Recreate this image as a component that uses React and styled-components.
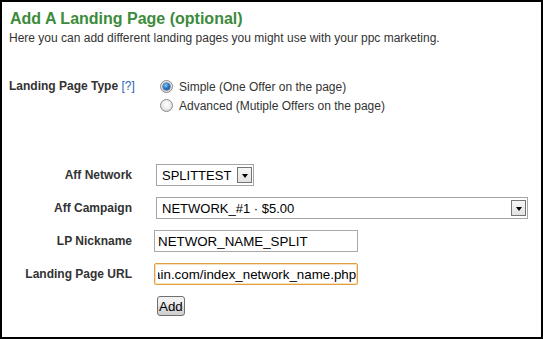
import React, { useEffect, useRef } from "react";
import styled, { createGlobalStyle } from "styled-components";

const Global = createGlobalStyle`
  html, body { margin: 0; padding: 0; background: #fff; }
  body { font-family: "Liberation Sans", Arial, sans-serif; }
`;

const Frame = styled.div`
  box-sizing: border-box;
  width: 543px;
  height: 339px;
  border: 2px solid #000;
  padding: 8px 7px 0 7px;
  background: #fff;
  font-family: "Liberation Sans", Arial, sans-serif;
  color: #333;
`;

const Title = styled.h2`
  margin: 0 0 0 1px;
  font-size: 16px;
  line-height: 18px;
  font-weight: bold;
  color: #3b8b3b;
`;

const Intro = styled.p`
  margin: 3px 0 0 0;
  font-size: 12px;
  line-height: 14px;
  color: #333;
`;

const Form = styled.div`
  display: flex;
  flex-direction: column;
  gap: 11px;
  margin-top: 32px;
`;

const Row = styled.div`
  display: grid;
  grid-template-columns: 123px 1fr;
  column-gap: 22px;
  align-items: ${(p) => (p.$top ? "start" : "center")};
  margin-bottom: ${(p) => p.$after || 0}px;
`;

const Label = styled.label`
  text-align: right;
  font-size: 12px;
  line-height: 19px;
  font-weight: bold;
  color: #333;
  white-space: nowrap;
`;

const Help = styled.a`
  font-weight: normal;
  color: #2d62b5;
  text-decoration: none;
`;

const RadioList = styled.div`
  display: flex;
  flex-direction: column;
`;

const RadioLine = styled.div`
  display: flex;
  align-items: center;
  height: 19px;
  font-size: 12px;
  color: #333;
`;

const RadioCircle = styled.span`
  position: relative;
  box-sizing: border-box;
  width: 13px;
  height: 13px;
  margin: 0 6px 0 6px;
  border-radius: 50%;
  border: 1px solid #8a8a8a;
  background: radial-gradient(circle at 50% 40%, #ffffff 0%, #ececec 50%, #c8c8c8 100%);
  flex-shrink: 0;

  &::after {
    content: "";
    display: ${(p) => (p.$checked ? "block" : "none")};
    position: absolute;
    left: 2px;
    top: 2px;
    width: 7px;
    height: 7px;
    border-radius: 50%;
    background: radial-gradient(circle at 40% 35%, #8fd0ff 0%, #2477c8 45%, #0e3f78 100%);
    box-shadow: 0 0 0 0.5px #173e66;
  }
`;

const SelectBox = styled.div`
  box-sizing: border-box;
  display: flex;
  align-items: center;
  width: ${(p) => p.$width}px;
  height: 22px;
  margin-left: 2px;
  padding: 0 1px 0 5px;
  border: 1px solid #a5a5a5;
  background: #fff;
  font-size: 13px;
  color: #000;
`;

const SelectText = styled.span`
  flex: 1;
  white-space: nowrap;
  overflow: hidden;
`;

const ArrowButton = styled.span`
  box-sizing: border-box;
  display: flex;
  align-items: center;
  justify-content: center;
  width: 15px;
  height: 16px;
  border: 1px solid #747474;
  background: linear-gradient(#f6f6f6, #e2e2e2);
  flex-shrink: 0;

  &::before {
    content: "";
    width: 0;
    height: 0;
    border-left: 3.5px solid transparent;
    border-right: 3.5px solid transparent;
    border-top: 4px solid #000;
    margin-top: 1px;
  }
`;

const TextInput = styled.input`
  box-sizing: border-box;
  width: 204px;
  height: 22px;
  margin: 0;
  padding: 0 1px 0 3px;
  border: 1px solid ${(p) => (p.$focused ? "#e2a045" : "#a9a9a9")};
  border-radius: ${(p) => (p.$focused ? "2px" : "0")};
  box-shadow: ${(p) => (p.$focused ? "inset 0 0 0 1px rgba(240, 190, 110, 0.45)" : "none")};
  outline: none;
  background: #fff;
  font-family: "Liberation Sans", Arial, sans-serif;
  font-size: 13.333px;
  color: #000;
`;

const Button = styled.button`
  box-sizing: border-box;
  height: 20px;
  margin-left: 3px;
  padding: 0 1px;
  border: 1px solid #707070;
  border-radius: 3px;
  background: linear-gradient(#f2f2f2 0%, #ebebeb 50%, #dddddd 51%, #cfcfcf 100%);
  font-family: "Liberation Sans", Arial, sans-serif;
  font-size: 13.333px;
  color: #000;
  justify-self: start;
`;

const Select = ({ value, width }) => (
  <SelectBox $width={width}>
    <SelectText>{value}</SelectText>
    <ArrowButton />
  </SelectBox>
);

const Field = ({ value, focused }) => {
  const ref = useRef(null);
  useEffect(() => {
    if (focused && ref.current) ref.current.scrollLeft = ref.current.scrollWidth;
  }, [focused]);
  return <TextInput ref={ref} readOnly defaultValue={value} $focused={focused} />;
};

export default function App() {
  return (
    <>
      <Global />
      <Frame>
        <Title>Add A Landing Page (optional)</Title>
        <Intro>Here you can add different landing pages you might use with your ppc marketing.</Intro>
        <Form>
          <Row $top $after={38}>
            <Label>
              Landing Page Type <Help href="#">[?]</Help>
            </Label>
            <RadioList>
              <RadioLine>
                <RadioCircle $checked />
                Simple (One Offer on the page)
              </RadioLine>
              <RadioLine>
                <RadioCircle />
                Advanced (Mutiple Offers on the page)
              </RadioLine>
            </RadioList>
          </Row>
          <Row>
            <Label>Aff Network</Label>
            <Select value="SPLITTEST" width={98} />
          </Row>
          <Row>
            <Label>Aff Campaign</Label>
            <Select value="NETWORK_#1 · $5.00" width={372} />
          </Row>
          <Row>
            <Label>LP Nickname</Label>
            <Field value="NETWOR_NAME_SPLIT" />
          </Row>
          <Row>
            <Label>Landing Page URL</Label>
            <Field value="http://www.domain.com/index_network_name.php" focused />
          </Row>
          <Row>
            <span />
            <Button>Add</Button>
          </Row>
        </Form>
      </Frame>
    </>
  );
}
